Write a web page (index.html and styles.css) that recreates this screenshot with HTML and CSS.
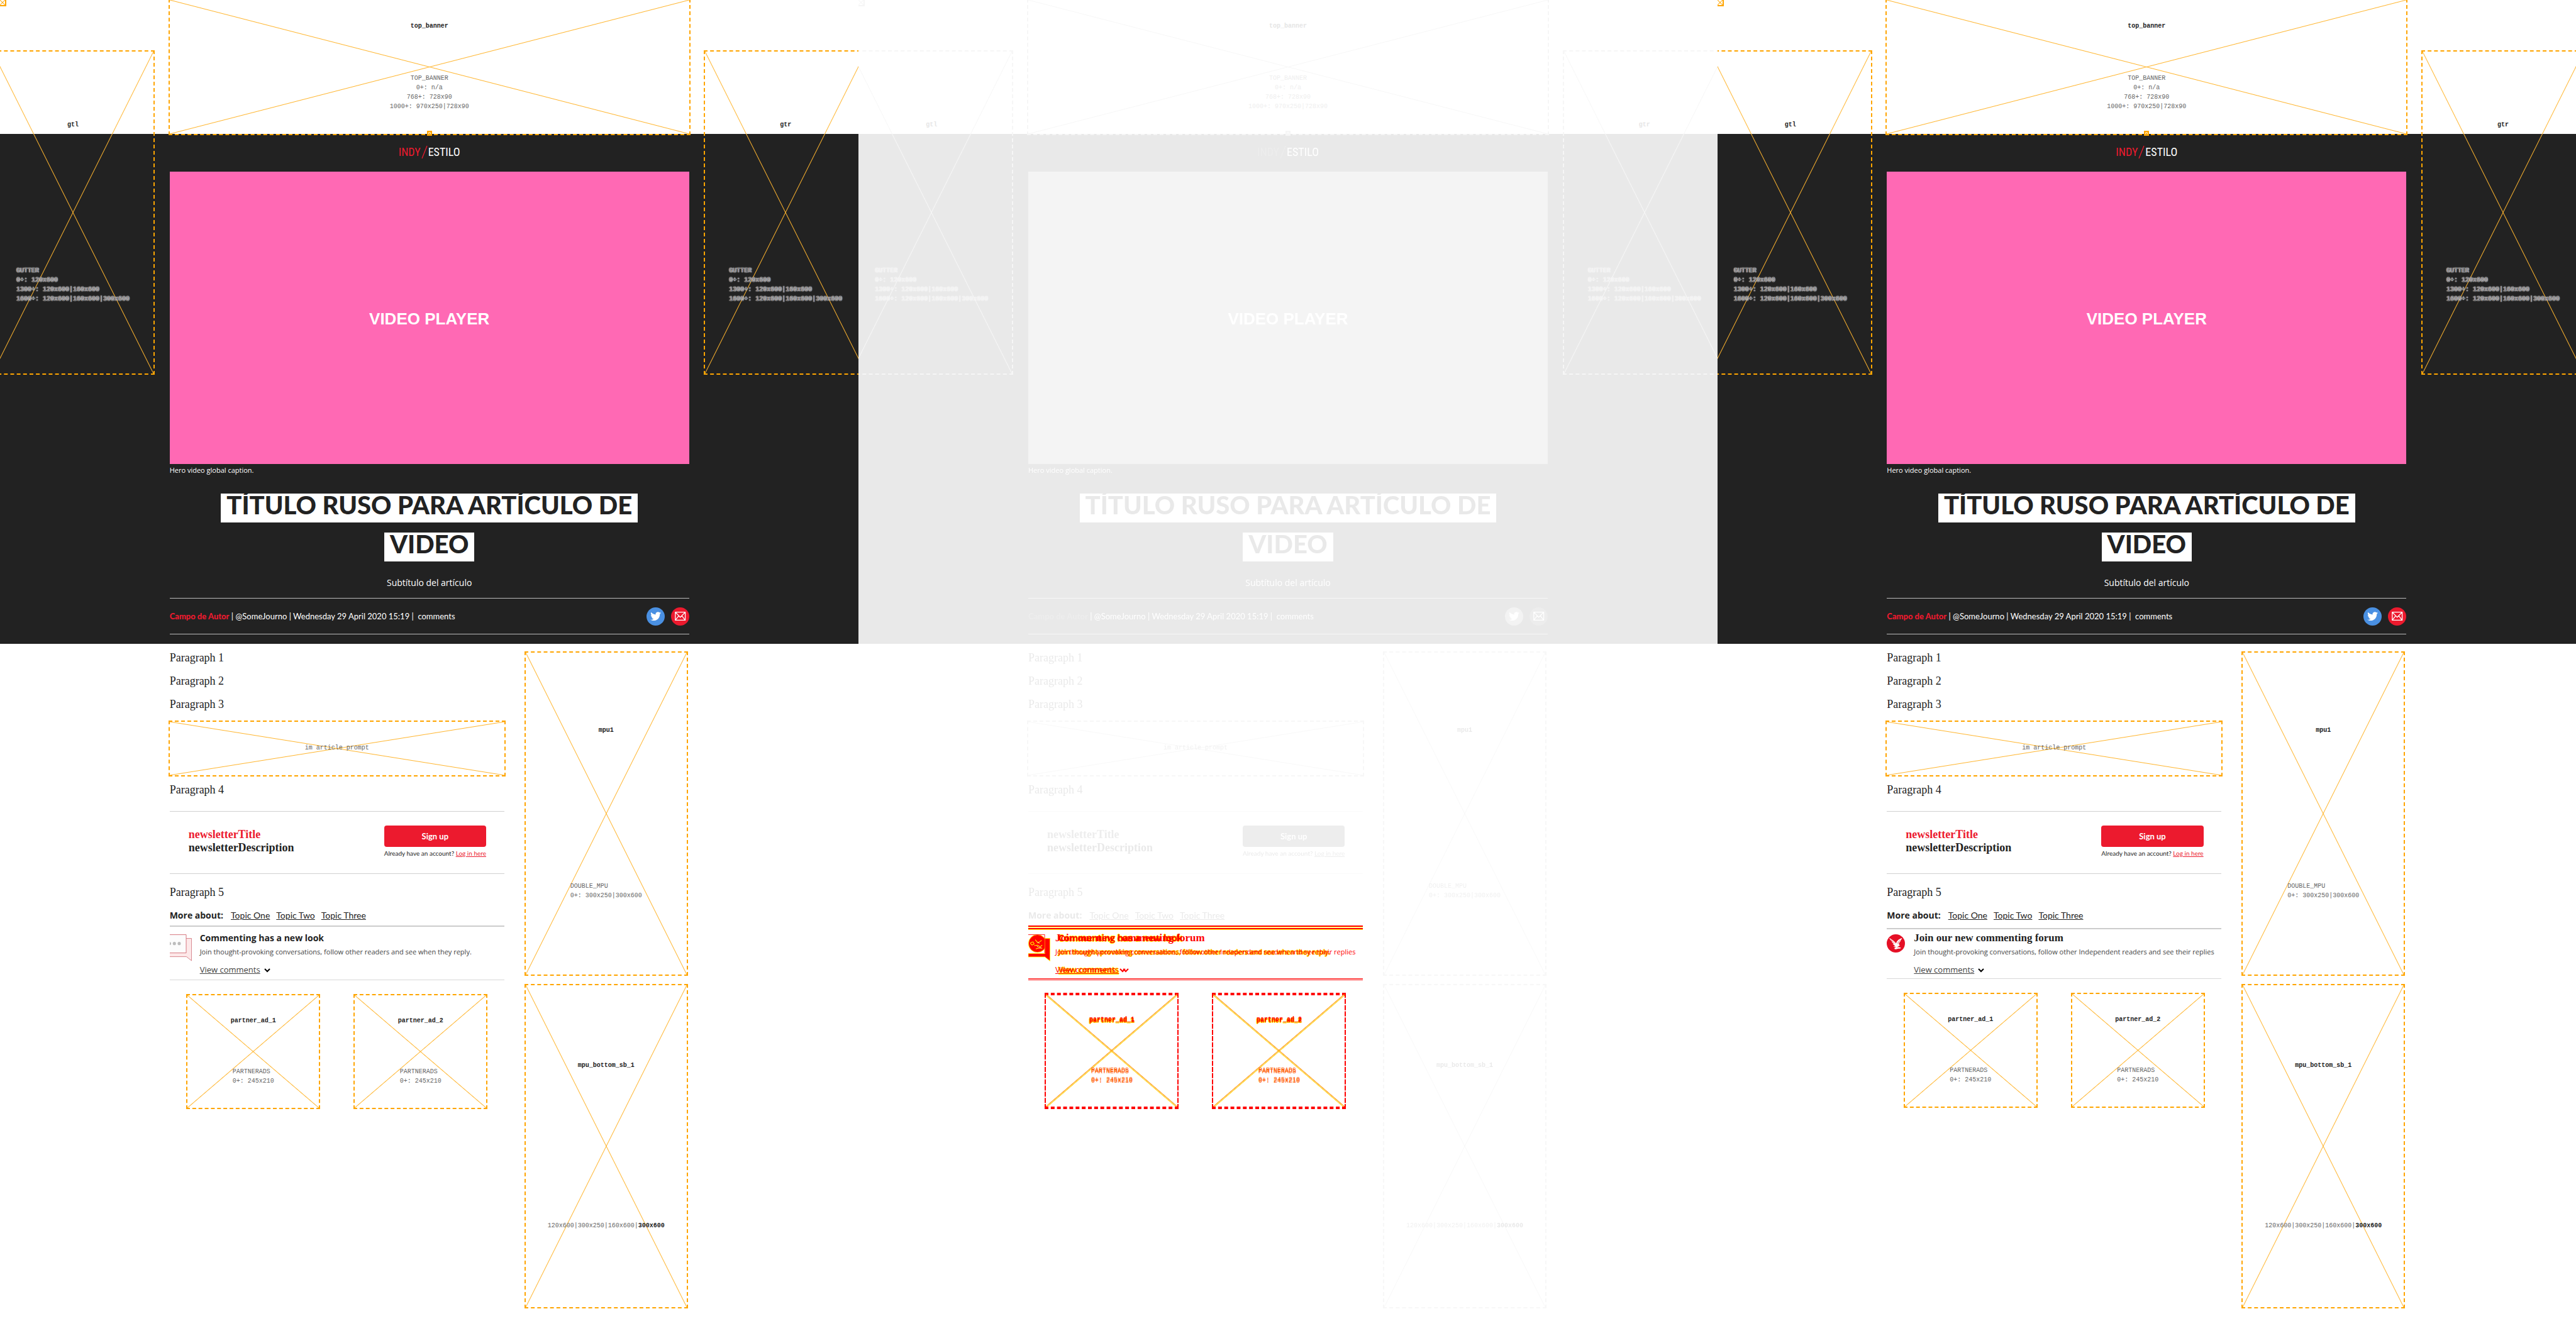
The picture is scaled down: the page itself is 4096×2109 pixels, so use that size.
FILE: index.html
```html
<!DOCTYPE html>
<html lang="es">
<head>
<meta charset="utf-8">
<title>Indy / Estilo</title>
<link rel="stylesheet" href="styles.css">
</head>
<body>
<svg class="sprite" aria-hidden="true">
  <symbol id="slash" viewBox="0 0 10 20"><path d="M9 0L1 20" stroke="#ec1a2e" stroke-width="1.3" fill="none"/></symbol>
  <symbol id="twitter" viewBox="0 0 34 34">
    <circle cx="17" cy="17" r="17" fill="#4a90e2"/>
    <path fill="#fff" d="M27.200 10.200c-.8.4-1.500.6-2.300.7.800-.6 1.400-1.300 1.700-2.200-.8.500-1.600.8-2.500 1a4.200 4.200 0 0 0-7.100 3.800c-3.400-.2-6.400-1.800-8.400-4.300-1.100 1.900-.6 4.300 1.200 5.600-.6 0-1.300-.2-1.800-.5 0 2 1.400 3.700 3.300 4.100-.6.200-1.200.2-1.800.1.500 1.600 2 2.800 3.800 2.800-1.700 1.400-3.900 2-6.100 1.700 7.800 4.700 17.600-.5 17.600-9.900v-.6c.9-.6 1.700-1.400 2.400-2.300z"/>
  </symbol>
  <symbol id="mail" viewBox="0 0 34 34">
    <circle cx="17" cy="17" r="17" fill="#ec1a2e"/>
    <path fill="none" stroke="#fff" stroke-width="1.500" d="M8 9h18.500v15H8zM8 9l9.200 9.500L26.500 9M8 24l6.500-8.200M26.500 24L20 15.800"/>
  </symbol>
  <symbol id="bubbles" viewBox="0 0 41 50">
    <path d="M-4 7.500H40.500V49L31 41.500H-4z" fill="#fde8e9" stroke="#d0737b"/>
    <path d="M-4 .5H30.500V34.500H-4z" fill="#fcfcfc" stroke="#d0636c"/>
    <g fill="#bcbcbc"><circle cx="-.5" cy="17" r="3"/><circle cx="8.500" cy="17" r="3"/><circle cx="17.500" cy="17" r="3"/></g>
  </symbol>
  <symbol id="eagle" viewBox="0 0 34 34">
    <circle cx="17" cy="17" r="17" fill="#e50f25"/>
    <path fill="#fff" d="M4.500 6.500l7 4.500c2.500 2 4.500 4 6 6 .5-2.500 2-4.500 4-6.500 2-1.700 4.500-2.800 7-3.500-.5 2-1.500 3-2.500 4 .6 1-1 2.500-1.800 3.300.3 1.200-1 2-1.700 3 .5 1.200.8 3 2.200 3.200-.6.800-1.700.7-2.200 1.300-.8 1.200-2.500 1.800-4 2.200l4.500 0c1.500.2 3 .5 3.500 1.500-1 1.500-4 1-6 1.600-1.500.6-3.500.9-6 .4l1-1.500-2 .3c.5-1.500 2.500-2 4-2.700-2.300-.2-4-.3-5.500-1.300 1.500-.2 3-.6 3.700-1.300-2-.7-3.500-2-4.500-3.500l1.700 0c-1.600-1-3-2-3.700-3.600l1.500 0C8.500 12.500 6.500 10.500 4.500 6.500z"/>
    <path fill="none" stroke="#e50f25" stroke-width=".6" d="M8 10l7 7M7.500 13l6 5M25 10.500l-5 6M24 14l-4 4"/>
  </symbol>
  <symbol id="chevron" viewBox="0 0 10 7"><path d="M1 1l4 4 4-4" fill="none" stroke="currentColor" stroke-width="2"/></symbol>
  <symbol id="bubble-change" viewBox="0 0 41 50">
    <path d="M0 .5H30V8H40V49L31 41.500H0z" fill="#fff"/>
    <circle cx="17" cy="17" r="16.500" fill="red" stroke="#ff0"/>
    <path d="M0 35.500H31V7.500H40.500V49.500L31 42H0z" fill="red" stroke="#ff0"/>
    <path d="M0 .5H30.500M30.500 0V35M6 7.500H27" stroke="red" fill="none"/>
    <path d="M5 15l4-1 2 4-4 2-3-3zM13 10l5 6 7-5M11 21l6-1 5 3 4-3M14 27l7-2 5 1" stroke="#ff0" stroke-width="1.200" fill="none"/>
    <path d="M18 14l3 3M16 22l3 2M20 25h4" stroke="#fff" fill="none"/>
  </symbol>
</svg>
<div class="board">

<section class="panel">
  <div class="ad dot dot-corner"></div>
  <div class="ad gutter gutter-left"><b>gtl</b><p>GUTTER<br>0+: 120x600<br>1300+: 120x600|160x600<br>1600+: 120x600|160x600|300x600</p></div>
  <div class="ad gutter gutter-right"><b>gtr</b><p>GUTTER<br>0+: 120x600<br>1300+: 120x600|160x600<br>1600+: 120x600|160x600|300x600</p></div>
  <div class="wrap ad banner"><b>top_banner</b><p>TOP_BANNER<br>0+: n/a<br>768+: 728x90<br>1000+: 970x250|728x90</p><div class="ad dot dot-banner"></div></div>
  <header class="hero">
    <div class="wrap">
      <a class="brand" href="#"><span class="brand-indy">INDY</span><svg class="slash"><use href="#slash"/></svg><span>ESTILO</span></a>
      <div class="video">VIDEO PLAYER</div>
      <p class="caption">Hero video global caption.</p>
      <h1><span>TÍTULO RUSO PARA ARTÍCULO DE</span> <span>VIDEO</span></h1>
      <p class="subtitle">Subtítulo del artículo</p>
      <div class="meta"><p><a class="author" href="#">Campo de Autor</a> | @SomeJourno | Wednesday 29 April 2020 15:19 |&nbsp; comments</p>
        <a class="share" href="#" aria-label="Twitter"><svg><use href="#twitter"/></svg></a><a class="share" href="#" aria-label="Email"><svg><use href="#mail"/></svg></a></div>
    </div>
  </header>
  <div class="wrap article">
    <main>
      <div class="story">
        <p>Paragraph 1</p><p>Paragraph 2</p><p>Paragraph 3</p>
        <div class="ad prompt">im article prompt</div>
        <p>Paragraph 4</p>
        <div class="newsletter">
          <h2><em>newsletterTitle</em><br>newsletterDescription</h2>
          <div class="signup"><button type="button">Sign up</button><small>Already have an account? <a href="#">Log in here</a></small></div>
        </div>
        <p>Paragraph 5</p>
        <nav class="topics"><b>More about:</b><a href="#">Topic One</a><a href="#">Topic Two</a><a href="#">Topic Three</a></nav>
      </div>
      <div class="version before">
        <section class="comments"><svg class="bubbles"><use href="#bubbles"/></svg>
          <div><h3>Commenting has a new look</h3><p>Join thought-provoking conversations, follow other readers and see when they reply.</p><a href="#">View comments</a><svg class="chevron"><use href="#chevron"/></svg></div></section>
        <div class="partners"><div class="ad"><b>partner_ad_1</b><p>PARTNERADS<br>0+: 245x210</p></div><div class="ad"><b>partner_ad_2</b><p>PARTNERADS<br>0+: 245x210</p></div></div>
      </div>
    </main>
    <aside>
      <div class="ad mpu"><b>mpu1</b><p>DOUBLE_MPU<br>0+: 300x250|300x600</p></div>
      <div class="ad mpu"><b>mpu_bottom_sb_1</b><p>120x600|300x250|160x600|<b>300x600</b></p></div>
    </aside>
  </div>
</section>

<section class="panel changes">
  <div class="ad dot dot-corner"></div>
  <div class="ad gutter gutter-left"><b>gtl</b><p>GUTTER<br>0+: 120x600<br>1300+: 120x600|160x600<br>1600+: 120x600|160x600|300x600</p></div>
  <div class="ad gutter gutter-right"><b>gtr</b><p>GUTTER<br>0+: 120x600<br>1300+: 120x600|160x600<br>1600+: 120x600|160x600|300x600</p></div>
  <div class="wrap ad banner"><b>top_banner</b><p>TOP_BANNER<br>0+: n/a<br>768+: 728x90<br>1000+: 970x250|728x90</p><div class="ad dot dot-banner"></div></div>
  <header class="hero">
    <div class="wrap">
      <a class="brand" href="#"><span class="brand-indy">INDY</span><svg class="slash"><use href="#slash"/></svg><span>ESTILO</span></a>
      <div class="video">VIDEO PLAYER</div>
      <p class="caption">Hero video global caption.</p>
      <h1><span>TÍTULO RUSO PARA ARTÍCULO DE</span> <span>VIDEO</span></h1>
      <p class="subtitle">Subtítulo del artículo</p>
      <div class="meta"><p><a class="author" href="#">Campo de Autor</a> | @SomeJourno | Wednesday 29 April 2020 15:19 |&nbsp; comments</p>
        <a class="share" href="#" aria-label="Twitter"><svg><use href="#twitter"/></svg></a><a class="share" href="#" aria-label="Email"><svg><use href="#mail"/></svg></a></div>
    </div>
  </header>
  <div class="wrap article">
    <main>
      <div class="story">
        <p>Paragraph 1</p><p>Paragraph 2</p><p>Paragraph 3</p>
        <div class="ad prompt">im article prompt</div>
        <p>Paragraph 4</p>
        <div class="newsletter">
          <h2><em>newsletterTitle</em><br>newsletterDescription</h2>
          <div class="signup"><button type="button">Sign up</button><small>Already have an account? <a href="#">Log in here</a></small></div>
        </div>
        <p>Paragraph 5</p>
        <nav class="topics"><b>More about:</b><a href="#">Topic One</a><a href="#">Topic Two</a><a href="#">Topic Three</a></nav>
      </div>
      <div class="stack">
        <div class="version before">
          <section class="comments"><svg class="bubbles"><use href="#bubble-change"/></svg>
            <div><h3>Commenting has a new look</h3><p>Join thought-provoking conversations, follow other readers and see when they reply.</p><a href="#">View comments</a><svg class="chevron"><use href="#chevron"/></svg></div></section>
          <div class="partners"><div class="ad"><b>partner_ad_1</b><p>PARTNERADS<br>0+: 245x210</p></div><div class="ad"><b>partner_ad_2</b><p>PARTNERADS<br>0+: 245x210</p></div></div>
        </div>
        <div class="version after">
          <section class="comments"><span class="eagle"></span>
            <div><h3>Join our new commenting forum</h3><p>Join thought-provoking conversations, follow other Independent readers and see their replies</p><a href="#">View comments</a><svg class="chevron"><use href="#chevron"/></svg></div></section>
          <div class="partners"><div class="ad"><b>partner_ad_1</b><p>PARTNERADS<br>0+: 245x210</p></div><div class="ad"><b>partner_ad_2</b><p>PARTNERADS<br>0+: 245x210</p></div></div>
        </div>
      </div>
    </main>
    <aside>
      <div class="ad mpu"><b>mpu1</b><p>DOUBLE_MPU<br>0+: 300x250|300x600</p></div>
      <div class="ad mpu"><b>mpu_bottom_sb_1</b><p>120x600|300x250|160x600|<b>300x600</b></p></div>
    </aside>
  </div>
</section>

<section class="panel">
  <div class="ad dot dot-corner"></div>
  <div class="ad gutter gutter-left"><b>gtl</b><p>GUTTER<br>0+: 120x600<br>1300+: 120x600|160x600<br>1600+: 120x600|160x600|300x600</p></div>
  <div class="ad gutter gutter-right"><b>gtr</b><p>GUTTER<br>0+: 120x600<br>1300+: 120x600|160x600<br>1600+: 120x600|160x600|300x600</p></div>
  <div class="wrap ad banner"><b>top_banner</b><p>TOP_BANNER<br>0+: n/a<br>768+: 728x90<br>1000+: 970x250|728x90</p><div class="ad dot dot-banner"></div></div>
  <header class="hero">
    <div class="wrap">
      <a class="brand" href="#"><span class="brand-indy">INDY</span><svg class="slash"><use href="#slash"/></svg><span>ESTILO</span></a>
      <div class="video">VIDEO PLAYER</div>
      <p class="caption">Hero video global caption.</p>
      <h1><span>TÍTULO RUSO PARA ARTÍCULO DE</span> <span>VIDEO</span></h1>
      <p class="subtitle">Subtítulo del artículo</p>
      <div class="meta"><p><a class="author" href="#">Campo de Autor</a> | @SomeJourno | Wednesday 29 April 2020 15:19 |&nbsp; comments</p>
        <a class="share" href="#" aria-label="Twitter"><svg><use href="#twitter"/></svg></a><a class="share" href="#" aria-label="Email"><svg><use href="#mail"/></svg></a></div>
    </div>
  </header>
  <div class="wrap article">
    <main>
      <div class="story">
        <p>Paragraph 1</p><p>Paragraph 2</p><p>Paragraph 3</p>
        <div class="ad prompt">im article prompt</div>
        <p>Paragraph 4</p>
        <div class="newsletter">
          <h2><em>newsletterTitle</em><br>newsletterDescription</h2>
          <div class="signup"><button type="button">Sign up</button><small>Already have an account? <a href="#">Log in here</a></small></div>
        </div>
        <p>Paragraph 5</p>
        <nav class="topics"><b>More about:</b><a href="#">Topic One</a><a href="#">Topic Two</a><a href="#">Topic Three</a></nav>
      </div>
      <div class="version after">
        <section class="comments"><svg class="eagle"><use href="#eagle"/></svg>
          <div><h3>Join our new commenting forum</h3><p>Join thought-provoking conversations, follow other Independent readers and see their replies</p><a href="#">View comments</a><svg class="chevron"><use href="#chevron"/></svg></div></section>
        <div class="partners"><div class="ad"><b>partner_ad_1</b><p>PARTNERADS<br>0+: 245x210</p></div><div class="ad"><b>partner_ad_2</b><p>PARTNERADS<br>0+: 245x210</p></div></div>
      </div>
    </main>
    <aside>
      <div class="ad mpu"><b>mpu1</b><p>DOUBLE_MPU<br>0+: 300x250|300x600</p></div>
      <div class="ad mpu"><b>mpu_bottom_sb_1</b><p>120x600|300x250|160x600|<b>300x600</b></p></div>
    </aside>
  </div>
</section>

</div>
</body>
</html>
```
FILE: styles.css
```css
* { box-sizing: border-box; }
body { margin: 0; background: #fff; color: #222; font-family: Lato, "Open Sans", sans-serif; font-size: 13px; }
h1, h2, h3, p { margin: 0; }
a { color: inherit; }
.sprite { position: absolute; width: 0; height: 0; }
.board { display: grid; grid-template-columns: repeat(3, minmax(0, 1fr)); min-height: 100vh; }
.panel { position: relative; overflow: hidden; }
.wrap { width: 60.5%; margin: 0 auto; }

/* Ad slots */
.ad {
  --edge: orange;
  --cross: #ffb52e;
  display: flex; flex-direction: column; align-items: center; justify-content: space-around;
  padding-bottom: 2px;
  outline: 2px dashed var(--edge);
  background:
    linear-gradient(to top right, transparent calc(50% - 1px), var(--cross) 50%, transparent calc(50% + 1px)),
    linear-gradient(to bottom right, transparent calc(50% - 1px), var(--cross) 50%, transparent calc(50% + 1px));
  font: 10px/15px "Liberation Mono", monospace;
  color: #666;
}
.ad b { color: #222; }
.banner { position: relative; z-index: 1; height: 213px; text-align: center; }
.gutter { position: absolute; z-index: 1; top: 82px; width: 256px; height: 512px; text-shadow: 0 0 1px #fff, 0 0 1px #fff, 0 0 2px #fff; }
.gutter-left { right: calc(100% - 244px); }
.gutter-right { left: calc(100% - 244px); }
.dot { position: absolute; padding: 0; }
.dot-corner { top: 0; left: 0; width: 8px; height: 8px; }
.dot-banner { bottom: -1px; left: calc(50% - 2px); width: 4px; height: 4px; }
.prompt { height: 85px; margin: 15px 0 11px; }
.mpu { height: 512px; }

/* Hero */
.hero { background: #222; color: #fff; height: 811px; }
.brand { display: flex; justify-content: center; align-items: center; height: 60px; padding-bottom: 2px; font: 18px/20px "Liberation Sans Narrow", "Roboto Condensed", Roboto, sans-serif; color: #fff; text-decoration: none; }
.brand-indy { color: #ec1a2e; }
.slash { width: 10px; height: 22px; margin: 0 1px; }
.video { display: flex; align-items: center; justify-content: center; height: 465px; padding-top: 2px; background: #ff69b4; font: bold 26px/30px "Liberation Sans", sans-serif; }
.caption { padding-top: 2px; font: 11px/16px "Open Sans", sans-serif; }
h1 { margin-top: 29px; text-align: center; font-family: "Lato Black", Lato, sans-serif; font-size: 40px; font-weight: 900; line-height: 36px; color: #222; display: flex; flex-direction: column; align-items: center; gap: 16px; white-space: nowrap; }
h1 span { background: #fff; padding: 0 9px 10px; }
.subtitle { margin-top: 22px; text-align: center; font: 14px/24px "Open Sans", sans-serif; }
.meta { display: flex; align-items: center; gap: 10px; height: 58px; margin-top: 12px; border: solid #bbb; border-width: 1px 0; }
.meta p { flex: 1; }
.author { color: #ec1a2e; font-weight: 900; text-decoration: none; }
.share, .share svg { display: block; width: 29px; height: 29px; }

/* Article */
.article { display: flex; gap: 34px; padding-right: 4px; }
main { flex: 1; min-width: 0; }
aside { width: 256px; display: grid; gap: 17px; align-content: start; padding-top: 14px; }
.story { padding-top: 10px; }
.story > p { margin-bottom: 12px; font: 18px/25px "Liberation Serif", serif; }
.story .newsletter { margin: 21px 0 17px; }
.newsletter { display: flex; align-items: center; justify-content: space-between; height: 100px; padding: 0 30px 4px; border: solid #d0d0d0; border-width: 1px 0; }
h2 { font: bold 18px/21px "Liberation Serif", serif; }
h2 em { color: #ec1a2e; font-style: normal; }
.signup { display: grid; gap: 4px; width: 161px; }
.signup button { height: 34px; border: 0; border-radius: 4px; background: #ec1a2e; color: #fff; font: bold 13px/20px Lato, sans-serif; }
.signup small { font-size: 10px; line-height: 13px; white-space: nowrap; }
.signup small a { color: #ec1a2e; }
.topics { display: flex; gap: 10px; height: 28px; font-size: 14px; line-height: 23px; }
.topics b { margin-right: 2px; font-family: "Open Sans", sans-serif; }

/* Comments and partner slots, before and after */
.comments { display: flex; border-top: 2px solid #ccc; border-bottom: 1px solid #d8d8d8; padding: 7px 0 5px; white-space: nowrap; font-family: "Open Sans", sans-serif; }
.comments h3 { font-size: 14px; line-height: 22px; margin-bottom: 2px; }
.comments p { font-size: 11px; line-height: 18px; margin-bottom: 9px; color: #444; }
.comments a { display: inline-block; font-size: 13px; line-height: 20px; color: #444; }
.chevron { width: 10px; height: 7px; margin-left: 6px; color: #000; }
.comments > div { line-height: 20px; height: 72px; }
.bubbles { width: 35px; height: 43px; margin: 5px 13px 0 0; }
.eagle { width: 29px; height: 29px; margin: 5px 14px 0 0; }
.after { padding-top: 4px; }
.after .comments { padding: 3px 0; }
.after h3 { font-family: "Liberation Serif", serif; font-size: 17px; }
.partners { display: grid; grid-template-columns: 1fr 1fr; justify-items: center; padding-top: 24px; }
.partners .ad { width: 209px; height: 179px; }

/* Changes between the two versions */
.changes .hero, .changes .story, .changes aside { filter: grayscale(1) opacity(.1); }
.changes .gutter, .changes .banner, .changes .dot { --edge: #f6f6f6; --cross: #f7f7f7; color: #efefef; }
.changes .gutter b, .changes .banner b { color: #e6e6e6; }
.stack { display: grid; }
.stack .version { grid-area: 1 / 1; min-width: 0; }
.stack .comments { border-color: red; box-shadow: inset 0 1px 0 #ff0; }
.stack h3, .stack p, .stack a, .stack b, .stack .chevron { color: red; text-shadow: 1px 0 #ff0, -1px 0 #ff0, 0 1px #ff0, 0 -1px #ff0; }
.stack .after h3, .stack .after p, .stack .after a, .stack .after b { text-shadow: none; }
.stack .ad { --edge: red; --cross: #ffd000; }
.stack .after .ad { --cross: #ff9000; }
.stack .ad p { color: #ff5a00; text-shadow: none; }
```
